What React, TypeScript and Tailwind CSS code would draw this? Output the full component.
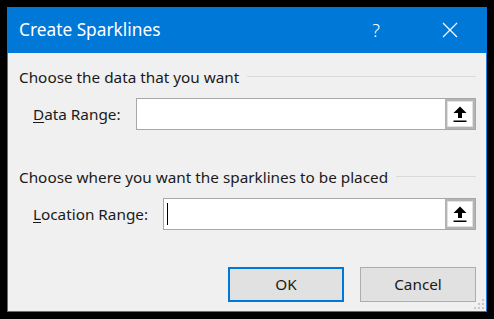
import React from 'react'

function PickButton() {
  return (
    <div className="w-[30px] h-full border-2 border-[#b4b4b4] bg-white flex items-center justify-center">
      <div className="w-full h-full border border-[#e0e0e0] flex items-center justify-center">
        <svg width="14" height="17" viewBox="0 0 14 17">
          <path d="M7 0.5 L13.5 7 L9 7 L9 12 L5 12 L5 7 L0.5 7 Z" fill="#000" />
          <rect x="0.5" y="14.5" width="13" height="1.5" fill="#000" />
        </svg>
      </div>
    </div>
  )
}

function RangeRow({ label, mnemonic, cursor }: { label: string; mnemonic: string; cursor?: boolean }) {
  return (
    <div className="flex items-center gap-[15px] pl-[25px] pr-[10px]">
      <span className="text-[15.3px] leading-5 text-[#1a1a1a]">
        <span className="underline underline-offset-2">{mnemonic}</span>
        {label}
      </span>
      <div className="flex-1 h-[32px] border border-[#a8a8a8] bg-white flex items-stretch">
        <div className="flex-1 flex items-center pl-[3px]">
          {cursor && <div className="w-px h-[22px] bg-black" />}
        </div>
        <PickButton />
      </div>
    </div>
  )
}

function Heading({ children }: { children: React.ReactNode }) {
  return (
    <div className="flex items-center gap-2 pl-[11px] pr-[10px]">
      <span className="text-[15.3px] leading-5 text-[#1a1a1a] whitespace-nowrap">{children}</span>
      <div className="flex-1 h-px bg-[#dadada] mt-[-1px]" />
    </div>
  )
}

export default function App() {
  return (
    <div
      className="w-[494px] h-[319px] bg-black p-[7px]"
      style={{ fontFamily: '"Segoe UI", "Noto Sans", "Open Sans", sans-serif' }}
    >
      <div className="w-full h-full flex flex-col border border-[#1883d7] bg-[#f0f0f0] select-none">
        {/* Title bar */}
        <div className="h-[46px] -mx-px -mt-px bg-[#0078d7] flex items-center pl-[12px] text-white">
          <span className="flex-1 text-[17.3px] leading-6">Create Sparklines</span>
          <span className="text-[18px] leading-6 mr-[62px] font-light">?</span>
          <svg className="mr-[29px]" width="16" height="16" viewBox="0 0 16 16">
            <path d="M1 1 L15 15 M15 1 L1 15" stroke="#fff" strokeWidth={1.2} />
          </svg>
        </div>

        {/* Body */}
        <div className="flex-1 flex flex-col pt-[14px]">
          <Heading>Choose the data that you want</Heading>
          <div className="mt-[11px]">
            <RangeRow mnemonic="D" label="ata Range:" />
          </div>
          <div className="mt-[37px]">
            <Heading>Choose where you want the sparklines to be placed</Heading>
          </div>
          <div className="mt-[11px]">
            <RangeRow mnemonic="L" label="ocation Range:" cursor />
          </div>

          {/* Buttons */}
          <div className="flex justify-end gap-4 mt-[37px] pr-[10px]">
            <button className="w-[116px] h-[35px] bg-[#e1e1e1] border-2 border-[#0078d7] text-[15.3px] text-[#1a1a1a]">
              OK
            </button>
            <button className="w-[116px] h-[35px] bg-[#e1e1e1] border border-[#adadad] text-[15.3px] text-[#1a1a1a]">
              Cancel
            </button>
          </div>
        </div>

        {/* Size grip */}
        <div className="relative h-0">
          <svg className="absolute right-px bottom-px" width="11" height="11" viewBox="0 0 11 11">
            <rect x="8" y="0" width="2" height="2" fill="#c8c8c8" />
            <rect x="4" y="4" width="2" height="2" fill="#c8c8c8" />
            <rect x="8" y="4" width="2" height="2" fill="#c8c8c8" />
            <rect x="0" y="8" width="2" height="2" fill="#c8c8c8" />
            <rect x="4" y="8" width="2" height="2" fill="#c8c8c8" />
            <rect x="8" y="8" width="2" height="2" fill="#c8c8c8" />
          </svg>
        </div>
      </div>
    </div>
  )
}
